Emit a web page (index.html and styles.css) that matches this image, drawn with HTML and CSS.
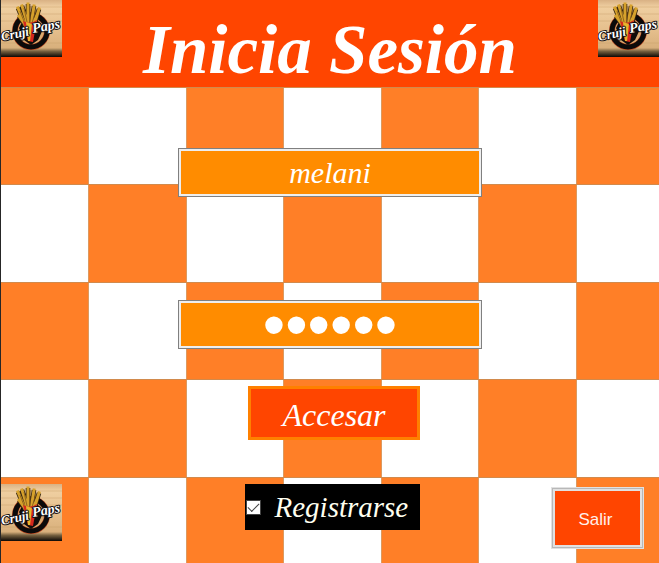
FILE: index.html
```html
<!DOCTYPE html>
<html lang="es">
<head>
<meta charset="utf-8">
<meta name="viewport" content="width=device-width, initial-scale=1">
<title>Inicia Sesión</title>
<link rel="stylesheet" href="styles.css">
</head>
<body>
<svg class="defs" width="0" height="0" aria-hidden="true">
  <defs>
    <linearGradient id="wood" x1="0" y1="0" x2="0" y2="1">
      <stop offset="0" stop-color="#d9b184"/>
      <stop offset=".12" stop-color="#efcfa1"/>
      <stop offset=".5" stop-color="#e6c08e"/>
      <stop offset=".84" stop-color="#d8b07c"/>
      <stop offset=".9" stop-color="#75603f"/>
      <stop offset="1" stop-color="#0c0805"/>
    </linearGradient>
    <symbol id="logo" viewBox="0 0 61 57">
      <rect width="61" height="57" fill="url(#wood)"/>
      <path d="M0 7h61M0 14h61M0 21h61M0 43h61" stroke="#c99d69" stroke-width=".7" opacity=".6"/>
      <circle cx="30" cy="31" r="16" fill="#d9aa70" stroke="#bd4a22" stroke-width="6"/>
      <circle cx="30" cy="31" r="16" fill="none" stroke="#0b0a0a" stroke-width="5"/>
      <path d="M18 28L23 40L30 45L37 40L43 27L36 20H22Z" fill="#100d0b"/>
      <path d="M17 8L24 25M21 6L27 25M27 4V25M33 6L30 25M38 9L33 25M18 16L26 27M36 15L31 27" stroke="#392711" stroke-width="4.6"/>
      <path d="M17 8L24 25M21 6L27 25M27 4V25M33 6L30 25M38 9L33 25M18 16L26 27M36 15L31 27" stroke="#d6a12c" stroke-width="3" stroke-linecap="square"/>
      <path d="M19 11L24 24M23 8L26 22M29 6V23M35 10L31 23" stroke="#80571a" stroke-width=".8"/>
      <path d="M22 21Q29 25 36 20L32 42L27 41Z" fill="#d4281e"/>
      <path d="M25 22L31 24L29 41H27Z" fill="#e7b52c"/>
      <g class="logo-text">
        <text x="1" y="41" font-size="13" transform="rotate(-12 1 41)">Cruji</text>
        <text x="32" y="33" font-size="14" transform="rotate(-10 32 33)">Paps</text>
      </g>
    </symbol>
  </defs>
</svg>
<div class="page">
  <header class="banner">
    <svg class="logo" role="img" aria-label="Cruji Paps"><use href="#logo"/></svg>
    <h1 class="title">Inicia Sesión</h1>
    <svg class="logo" role="img" aria-label="Cruji Paps"><use href="#logo"/></svg>
  </header>
  <form class="board">
    <div class="fields">
      <input class="field" type="text" value="melani" aria-label="Usuario">
      <input class="field field-password" type="password" value="melani" aria-label="Contraseña">
      <button class="submit" type="button">Accesar</button>
    </div>
    <div class="bottom">
      <svg class="logo" role="img" aria-label="Cruji Paps"><use href="#logo"/></svg>
      <label class="register"><input class="check" type="checkbox" checked>Registrarse</label>
      <button class="exit" type="button">Salir</button>
    </div>
  </form>
</div>
</body>
</html>
```
FILE: styles.css
```css
* {
  box-sizing: border-box;
}

body {
  margin: 0;
  font-family: "Monotype Corsiva", "Liberation Serif", serif;
}

.defs {
  position: absolute;
}

.page {
  display: flex;
  flex-direction: column;
  min-height: 100vh;
  border-left: 1px solid #262626;
}

.banner {
  display: grid;
  grid-template-columns: auto 1fr auto;
  align-items: start;
  background: #ff4500;
}

.logo {
  display: block;
  width: 61px;
  height: 57px;
}

.logo-text {
  font-family: "Liberation Serif", serif;
  font-style: italic;
  font-weight: bold;
  fill: #fff;
  stroke: #141010;
  stroke-width: 2px;
  stroke-linejoin: round;
  paint-order: stroke;
}

.title {
  margin: 0;
  padding: 13px 0 0;
  color: #fff;
  font-size: 69px;
  font-style: italic;
  font-weight: bold;
  line-height: 74px;
  text-align: center;
}

.board {
  flex: 1;
  display: flex;
  flex-direction: column;
  justify-content: space-between;
  padding-top: 61px;
  background-color: #fff;
  background-image:
    linear-gradient(#d28a4c 1px, transparent 1px 97px, #d28a4c 97px 98px, transparent 98px),
    linear-gradient(90deg, #dc9a60 1px, transparent 1px 97px, #dc9a60 97px 98px, transparent 98px),
    conic-gradient(#fff 25%, #ff7f27 25% 50%, #fff 50% 75%, #ff7f27 75%);
  background-size: 195px 195px;
  background-position: -10px 0;
}

.fields {
  display: flex;
  flex-direction: column;
  align-items: center;
}

.field {
  width: 304px;
  max-width: 100%;
  height: 49px;
  margin: 0 0 103px;
  padding: 0 8px;
  border: 1px solid #808080;
  outline: 2px solid #eee;
  outline-offset: -3px;
  border-radius: 0;
  background: #ff8c00;
  color: #fff;
  font-family: inherit;
  font-size: 30px;
  font-style: italic;
  text-align: center;
}

.field-password {
  margin-bottom: 37px;
  font-family: "Liberation Sans", sans-serif;
  font-size: 64px;
  font-style: normal;
}

.submit {
  width: 172px;
  height: 54px;
  margin-left: 8px;
  padding: 4px 0 0;
  border: 3px solid #ff8000;
  background: #ff4500;
  color: #fff;
  font-family: inherit;
  font-size: 32px;
  font-style: italic;
}

.bottom {
  display: grid;
  grid-template-columns: 1fr auto 1fr;
  align-items: start;
  padding: 44px 0 14px;
}

.register {
  display: flex;
  align-items: center;
  gap: 14px;
  width: 175px;
  height: 46px;
  margin-left: 4px;
  background: #000;
  color: #fffff0;
  font-size: 29px;
  font-style: italic;
}

.check {
  appearance: none;
  flex: none;
  display: grid;
  place-items: center;
  width: 15px;
  height: 15px;
  margin: 0 0 0 1px;
  border: 1px solid #444;
  background: #fff;
}

.check:checked::before {
  content: "";
  width: 10px;
  height: 5px;
  margin-bottom: 3px;
  border: solid #444;
  border-width: 0 0 1px 1px;
  transform: rotate(-45deg);
}

.exit {
  justify-self: end;
  width: 93px;
  height: 62px;
  margin: 3px 15px 0 0;
  padding: 4px 4px 0 0;
  border: 4px solid #e1e1e1;
  outline: 1px solid #b8b8b8;
  outline-offset: -2px;
  background: #ff4500;
  color: #fff0eb;
  font-family: "Liberation Sans", sans-serif;
  font-size: 17px;
}
```
